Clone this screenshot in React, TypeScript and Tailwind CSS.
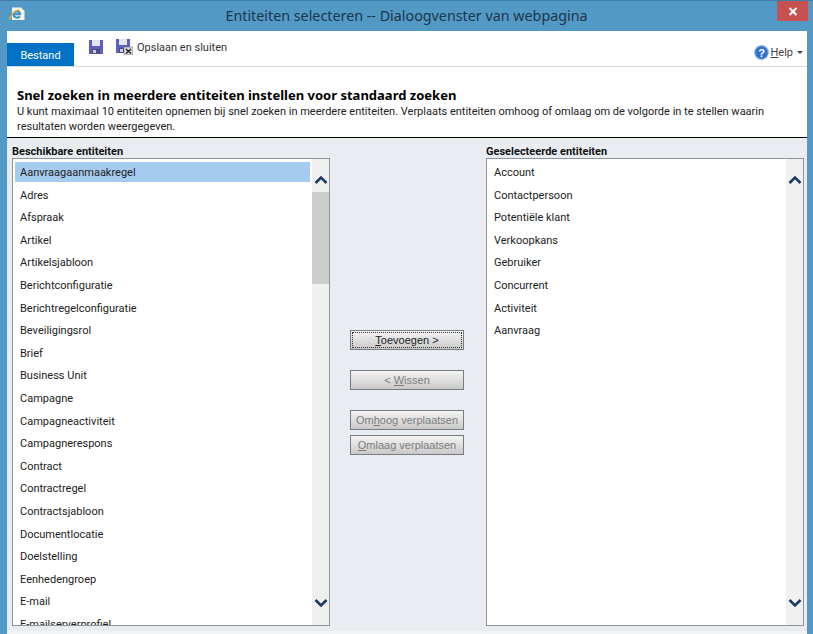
import React from 'react';

const available = [
  'Aanvraagaanmaakregel', 'Adres', 'Afspraak', 'Artikel', 'Artikelsjabloon', 'Berichtconfiguratie',
  'Berichtregelconfiguratie', 'Beveiligingsrol', 'Brief', 'Business Unit', 'Campagne', 'Campagneactiviteit',
  'Campagnerespons', 'Contract', 'Contractregel', 'Contractsjabloon', 'Documentlocatie', 'Doelstelling',
  'Eenhedengroep', 'E-mail', 'E-mailserverprofiel',
];

const selected = ['Account', 'Contactpersoon', 'Potentiële klant', 'Verkoopkans', 'Gebruiker', 'Concurrent', 'Activiteit', 'Aanvraag'];

const Chevron: React.FC<{ up?: boolean }> = ({ up }) => (
  <svg width="14" height="10" viewBox="0 0 14 10" fill="none">
    <path d={up ? 'M1.5 8 L7 2.5 L12.5 8' : 'M1.5 2 L7 7.5 L12.5 2'} stroke="#1b3a64" strokeWidth="2.6" />
  </svg>
);

const Floppy: React.FC<{ close?: boolean }> = ({ close }) => (
  <svg width={close ? 17 : 15} height={close ? 16 : 14} viewBox={close ? '0 0 17 16' : '0 0 15 14'}>
    <rect x="0" y="0" width="14" height="14" fill="#5a5fc0" />
    <rect x="3" y="0" width="8" height="6" fill="#e4e4f0" />
    <rect x="3" y="9" width="8" height="5" fill="#4a4e78" />
    <rect x="4" y="10" width="3" height="3" fill="#d0d0dc" />
    {close && (
      <>
        <rect x="8" y="8" width="9" height="8" fill="#d8d8d8" stroke="#777" strokeWidth="0.6" />
        <path d="M10 10 L15 14.5 M15 10 L10 14.5" stroke="#222" strokeWidth="1.4" />
      </>
    )}
  </svg>
);

// small browser logo: a page corner behind a blue "e" with a yellow swoosh
const BrowserIcon = () => (
  <svg width="16" height="15" viewBox="0 0 16 15">
    <path d="M3 0.5 H12 L15.5 4 V13 H3 Z" fill="#f7f4e6" />
    <path d="M4.2 7.2 H11 C11 4 5.5 3.4 4.6 6.8 C3.8 10.5 8.8 12 11 9.4" fill="none" stroke="#2a8ed6" strokeWidth="1.9" />
    <path d="M0.8 12.5 C1 9 5 4.5 10 2.6" fill="none" stroke="#e6ae24" strokeWidth="1.3" />
  </svg>
);

const HelpIcon = () => (
  <svg width="15" height="15" viewBox="0 0 15 15">
    <circle cx="7.5" cy="7.5" r="6.8" fill="#2f6fd0" stroke="#8fb4e4" strokeWidth="1.2" />
    <text x="7.5" y="11.5" textAnchor="middle" fontSize="11" fontWeight="700" fill="#fff" fontFamily="Liberation Sans, sans-serif">?</text>
  </svg>
);

const ListPanel: React.FC<{ title: string; items: string[]; active?: string; thumb?: boolean }> = ({ title, items, active, thumb }) => (
  <div className="w-[318px] flex flex-col">
    <div className="h-[20px] pt-[7px] text-[11px] leading-[14px] font-bold text-[#111]">{title}</div>
    <div className="h-[468px] flex border border-[#8f9498] bg-white overflow-hidden">
      <div className="flex-1 pt-[3px] pl-[2px] pr-[2px] overflow-hidden">
        {items.map((item) => (
          <div key={item} className="h-[22.6px] shrink-0 text-[11px] leading-[22px] text-[#222]">
            <div className={`h-[20px] pl-[5px] ${item === active ? 'bg-[#a6cbf0]' : ''}`}>{item}</div>
          </div>
        ))}
      </div>
      <div className="w-[17px] flex flex-col items-center bg-[#f0f0f0]">
        <div className="h-[33px] pt-[16px] flex justify-center">
          <Chevron up />
        </div>
        {thumb && <div className="w-full h-[92px] bg-[#cdcdcd]" />}
        <div className="flex-1" />
        <div className="h-[33px] pt-[6px] flex justify-center">
          <Chevron />
        </div>
      </div>
    </div>
  </div>
);

const ActionButton: React.FC<{ focused?: boolean; dim?: boolean; className?: string; children: React.ReactNode }> = ({ focused, dim, className, children }) => (
  <button
    type="button"
    className={`relative w-[114px] h-[20px] border border-[#777c80] bg-gradient-to-b from-[#f4f4f4] to-[#c9c9c9] text-[11px] leading-[16px] font-['Liberation_Sans',sans-serif] ${dim ? 'text-[#7d7d7d]' : 'text-[#222]'} ${className ?? ''}`}
  >
    {focused && <span className="absolute inset-[1px] border border-dotted border-[#333]" />}
    {children}
  </button>
);

export default function App() {
  return (
    <div className="w-[813px] h-[634px] overflow-hidden flex flex-col bg-[#5399c6] font-['Roboto',sans-serif] border-t border-[#3f7ea8]">
      {/* title bar */}
      <div className="h-[30px] shrink-0 flex items-start">
        <div className="w-[36px] pl-[9px] pt-[6px]">
          <BrowserIcon />
        </div>
        <div className="flex-1 text-center pt-[5px] text-[14.3px] leading-[20px] text-[#1c3548] font-['Noto_Sans',sans-serif]">
          Entiteiten selecteren -- Dialoogvenster van webpagina
        </div>
        <div className="w-[36px]">
          <div className="w-[31px] h-[20px] bg-[#c75050] flex items-center justify-center">
            <svg width="10" height="9" viewBox="0 0 10 9">
              <path d="M1.5 1 L8.5 8 M8.5 1 L1.5 8" stroke="#fff" strokeWidth="2" />
            </svg>
          </div>
        </div>
      </div>

      <div className="flex-1 ml-[7px] mr-[6px] flex flex-col bg-white min-h-0">
        {/* ribbon */}
        <div className="h-[36px] shrink-0 flex items-end border-b border-[#d9d9d9]">
          <div className="w-[67px] h-[23px] bg-[#0072c6] text-white text-[11px] leading-[26px] text-center">Bestand</div>
          <div className="self-start flex items-center pt-[8px] pl-[15px]">
            <Floppy />
            <div className="ml-[12px] flex items-center">
              <Floppy close />
              <span className="ml-[4px] mt-[1px] text-[11px] leading-[14px] text-[#333]">Opslaan en sluiten</span>
            </div>
          </div>
          <div className="flex-1" />
          <div className="self-start flex items-center pt-[14px] pr-[4px]">
            <HelpIcon />
            <span className="ml-[1px] text-[11px] leading-[14px] text-[#444]"><u>H</u>elp</span>
            <span className="ml-[4px] w-0 h-0 border-x-[3px] border-x-transparent border-t-[3px] border-t-[#444]" />
          </div>
        </div>

        {/* heading */}
        <div className="h-[71px] shrink-0 pl-[10px] pr-[10px] pt-[20px] border-b border-black">
          <div className="text-[13px] leading-[17px] font-bold text-black font-['Noto_Sans',sans-serif]">
            Snel zoeken in meerdere entiteiten instellen voor standaard zoeken
          </div>
          <div className="text-[11px] leading-[15px] text-[#222]">
            U kunt maximaal 10 entiteiten opnemen bij snel zoeken in meerdere entiteiten. Verplaats entiteiten omhoog of omlaag om de volgorde in te stellen waarin resultaten worden weergegeven.
          </div>
        </div>

        {/* selection panels */}
        <div className="flex-1 min-h-0 bg-[#e9edf1] flex pl-[5px] pr-[3px]">
          <ListPanel title="Beschikbare entiteiten" items={available} active="Aanvraagaanmaakregel" thumb />
          <div className="flex-1 flex flex-col items-center pt-[192px] pr-[2px]">
            <ActionButton focused><u>T</u>oevoegen &gt;</ActionButton>
            <ActionButton dim className="mt-[20px]">&lt; <u>W</u>issen</ActionButton>
            <ActionButton dim className="mt-[20px]">Om<u>h</u>oog verplaatsen</ActionButton>
            <ActionButton dim className="mt-[5px]"><u>O</u>mlaag verplaatsen</ActionButton>
          </div>
          <ListPanel title="Geselecteerde entiteiten" items={selected} />
        </div>
        <div className="h-[3px] shrink-0 bg-[#f2f3f4]" />
      </div>
    </div>
  );
}
